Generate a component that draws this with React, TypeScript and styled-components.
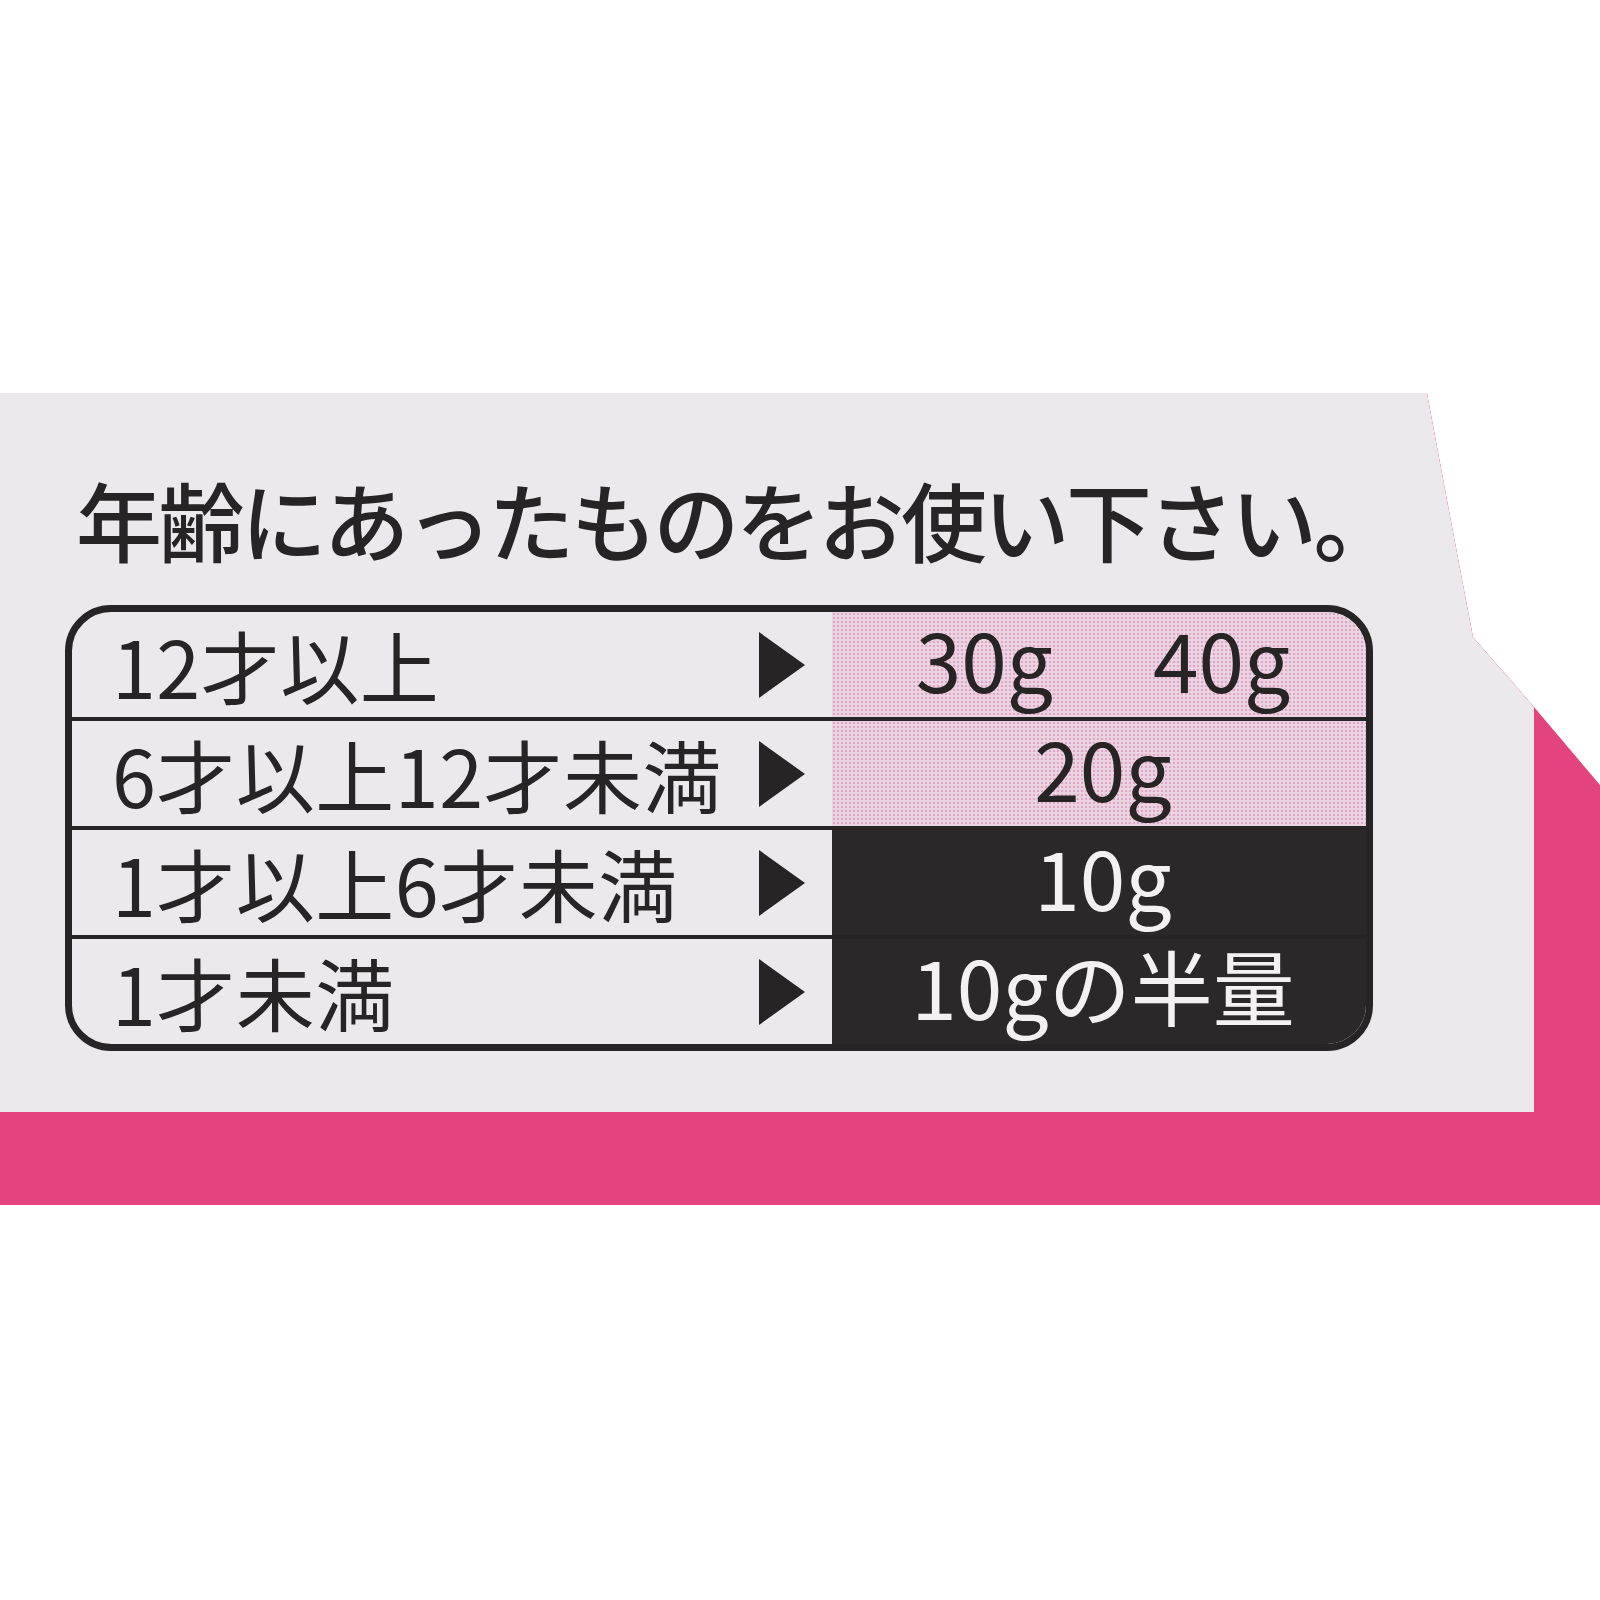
import React from 'react'
import styled, { createGlobalStyle, css } from 'styled-components'

const ink = '#262425'

const GlobalStyle = createGlobalStyle`
    html, body {
        margin:0;
        padding:0;
        background:#fff;
    }
    body {
        font-family:"Noto Sans CJK JP", "Noto Sans", sans-serif;
    }
`

const Page = styled.div`
    width:1600px;
    height:1600px;
    background:#fff;
    overflow:hidden;
    padding-top:393px;
    box-sizing:border-box;
`

// pink box behind the label, cut off at the top right
const Package = styled.section`
    height:812px;
    background:#e3437f;
    clip-path:polygon(0 0, 1427px 0, 1447px 107px, 1473px 244px, 1534px 314px, 1600px 392px, 1600px 100%, 0 100%);
`

const Panel = styled.div`
    width:1534px;
    height:719px;
    background:#ebe9eb;
    clip-path:polygon(0 0, 1427px 0, 1447px 107px, 1473px 244px, 1534px 314px, 1534px 100%, 0 100%);
    padding:83px 0 0 65px;
    box-sizing:border-box;
    display:flex;
    flex-direction:column;
`

const Heading = styled.h1`
    margin:0 0 43px 11px;
    font-size:86px;
    line-height:86px;
    font-weight:500;
    letter-spacing:-3.5px;
    color:${ink};
    white-space:nowrap;
`

const Table = styled.div`
    width:1308px;
    border:7px solid ${ink};
    border-radius:46px;
    box-sizing:border-box;
`

const Row = styled.div`
    display:grid;
    grid-template-columns:760px 1fr;
    height:105px;
    & + & {
        border-top:4px solid ${ink};
    }
    &:first-child > div:last-child {
        border-top-right-radius:39px;
    }
    &:last-child > div:last-child {
        border-bottom-right-radius:39px;
    }
`

const Label = styled.div`
    display:flex;
    align-items:center;
    padding:0 27px 0 40px;
    font-size:79px;
    line-height:1;
    font-weight:400;
    letter-spacing:0.5px;
    color:${ink};
    white-space:nowrap;
`

const Arrow = styled.span`
    margin-left:auto;
    width:0;
    height:0;
    border-top:33px solid transparent;
    border-bottom:33px solid transparent;
    border-left:46px solid ${ink};
`

const Value = styled.div<{ $tone: 'pink' | 'dark' }>`
    display:flex;
    align-items:center;
    justify-content:center;
    gap:100px;
    padding:0 0 14px 8px;
    font-size:82px;
    line-height:1;
    font-weight:400;
    white-space:nowrap;
    ${p => p.$tone === 'pink' ? css`
        color:${ink};
        background-color:#edd3e2;
        background-image:radial-gradient(#d9a8c4 35%, transparent 40%);
        background-size:4px 4px;
    ` : css`
        color:#f3f1f2;
        background:#2a2829;
    `}
`

interface Dose {
    age: string
    amounts: string[]
    tone: 'pink' | 'dark'
}

const doses: Dose[] = [
    { age: '12才以上', amounts: ['30g', '40g'], tone: 'pink' },
    { age: '6才以上12才未満', amounts: ['20g'], tone: 'pink' },
    { age: '1才以上6才未満', amounts: ['10g'], tone: 'dark' },
    { age: '1才未満', amounts: ['10gの半量'], tone: 'dark' },
]

const App: React.FC = () => {
    return (
        <Page>
            <GlobalStyle />
            <Package>
                <Panel>
                    <Heading>年齢にあったものをお使い下さい。</Heading>
                    <Table>
                        {doses.map(d => (
                            <Row key={d.age}>
                                <Label>
                                    {d.age}
                                    <Arrow />
                                </Label>
                                <Value $tone={d.tone}>
                                    {d.amounts.map(a => <span key={a}>{a}</span>)}
                                </Value>
                            </Row>
                        ))}
                    </Table>
                </Panel>
            </Package>
        </Page>
    )
}

export default App
